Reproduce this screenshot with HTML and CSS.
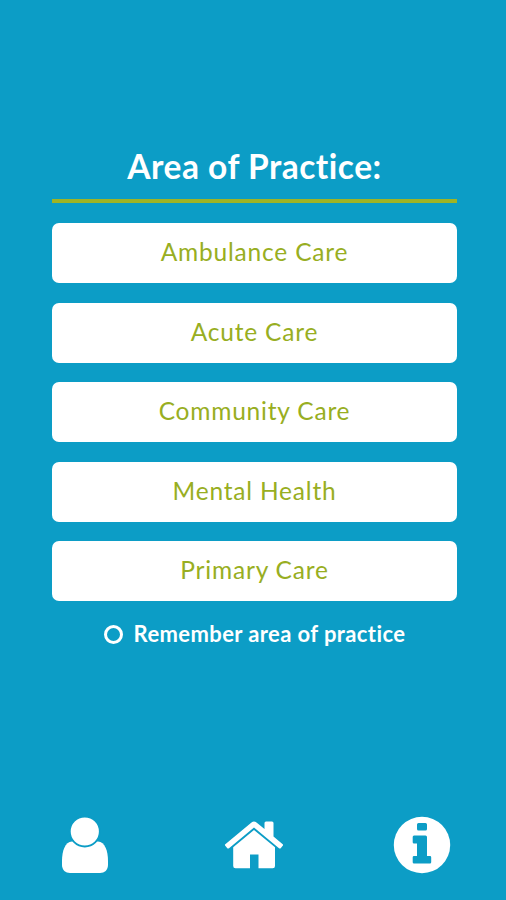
FILE: index.html
```html
<!DOCTYPE html>
<html lang="en">
<head>
  <meta charset="UTF-8">
  <meta name="viewport" content="width=device-width, initial-scale=1">
  <title>Area of Practice</title>
  <link rel="stylesheet" href="styles.css">
</head>
<body>
  <div class="screen">
    <main class="content">
      <h1>Area of Practice:</h1>
      <div class="options">
        <button type="button" class="option">Ambulance Care</button>
        <button type="button" class="option">Acute Care</button>
        <button type="button" class="option">Community Care</button>
        <button type="button" class="option">Mental Health</button>
        <button type="button" class="option">Primary Care</button>
      </div>
      <label class="remember">
        <input type="checkbox">
        <span>Remember area of practice</span>
      </label>
    </main>

    <!-- Bottom navigation -->
    <nav class="bottom-nav">
      <a href="#" aria-label="Profile">
        <svg width="60" height="60" viewBox="0 0 60 60">
          <path fill="#fff" d="M17 26.500C10 27 7 36 7 46V50C7 55 10.500 58 15 58H45C49.500 58 53 55 53 50V46C53 36 50 27 43 26.500Z"/>
          <circle cx="29.800" cy="16.500" r="15" fill="#fff" stroke="#0c9dc6" stroke-width="1.800"/>
        </svg>
      </a>
      <a href="#" aria-label="Home">
        <svg width="60" height="60" viewBox="0 0 60 60">
          <path fill="#fff" d="M27.500 7.500Q30 5.300 32.500 7.500L40.500 14V8Q40.500 6.500 42 6.500H48Q49.500 6.500 49.500 8V21.500L58.700 29.300Q59.500 30 58.700 30.800L56.700 33.200Q56 34 55 33.200L30 12.600L5 33.200Q4 34 3.300 33.200L1.300 30.800Q.5 30 1.300 29.300Z"/>
          <path fill="#fff" d="M30 15L51 32.300V51Q51 53.300 48.700 53.300H34.500V39.500H26V53.300H11.500Q9.200 53.300 9.200 51V32.300Z"/>
        </svg>
      </a>
      <a href="#" aria-label="Information">
        <svg width="60" height="60" viewBox="0 0 60 60">
          <circle cx="30" cy="30" r="28.200" fill="#fff"/>
          <path fill="#0c9dc6" d="M26.500 8H33.500Q35 8 35 9.500V14Q35 15.500 33.500 15.500H26.500Q25 15.500 25 14V9.500Q25 8 26.500 8ZM22 20.500H33.500Q35 20.500 35 22V41H38Q39.200 41 39.200 42.200V47.200Q39.200 48.500 38 48.500H22Q20.700 48.500 20.700 47.200V42.200Q20.700 41 22 41H25V28.500H22Q20.700 28.500 20.700 27.200V22Q20.700 20.500 22 20.500Z"/>
        </svg>
      </a>
    </nav>
  </div>
</body>
</html>
```
FILE: styles.css
```css
* {
  margin: 0;
  padding: 0;
  box-sizing: border-box;
}
body {
  font-family: Lato, "Open Sans", sans-serif;
  font-variant-ligatures: none;
  background: #0c9dc6;
  color: #fff;
}
.screen {
  display: flex;
  flex-direction: column;
  justify-content: space-between;
  height: 900px;
  padding: 145px 49px 25px 52px;
}
h1 {
  height: 58px;
  border-bottom: 4px solid #9fb425;
  font-size: 33.5px;
  line-height: 43px;
  text-align: center;
  letter-spacing: 0.5px;
}
/* Practice area buttons */
.options {
  display: flex;
  flex-direction: column;
  gap: 19.6px;
  margin-top: 20px;
}
.option {
  height: 60px;
  padding-bottom: 2px;
  border: 0;
  border-radius: 7px;
  background: #fff;
  color: #98ae22;
  font-family: inherit;
  font-size: 24.5px;
  line-height: 58px;
  letter-spacing: 0.8px;
  cursor: pointer;
}
.remember {
  display: flex;
  align-items: center;
  justify-content: center;
  gap: 11px;
  margin-top: 19px;
  font-size: 22px;
  font-weight: 700;
  line-height: 28px;
  letter-spacing: 0.4px;
}
.remember input {
  appearance: none;
  width: 19px;
  height: 19px;
  border: 3px solid #fff;
  border-radius: 50%;
}
.remember input:checked {
  background: #9fb425;
}
/* Bottom navigation */
.bottom-nav {
  display: flex;
  justify-content: space-between;
  padding: 0 5px 0 3px;
}
.bottom-nav svg {
  display: block;
}
```
